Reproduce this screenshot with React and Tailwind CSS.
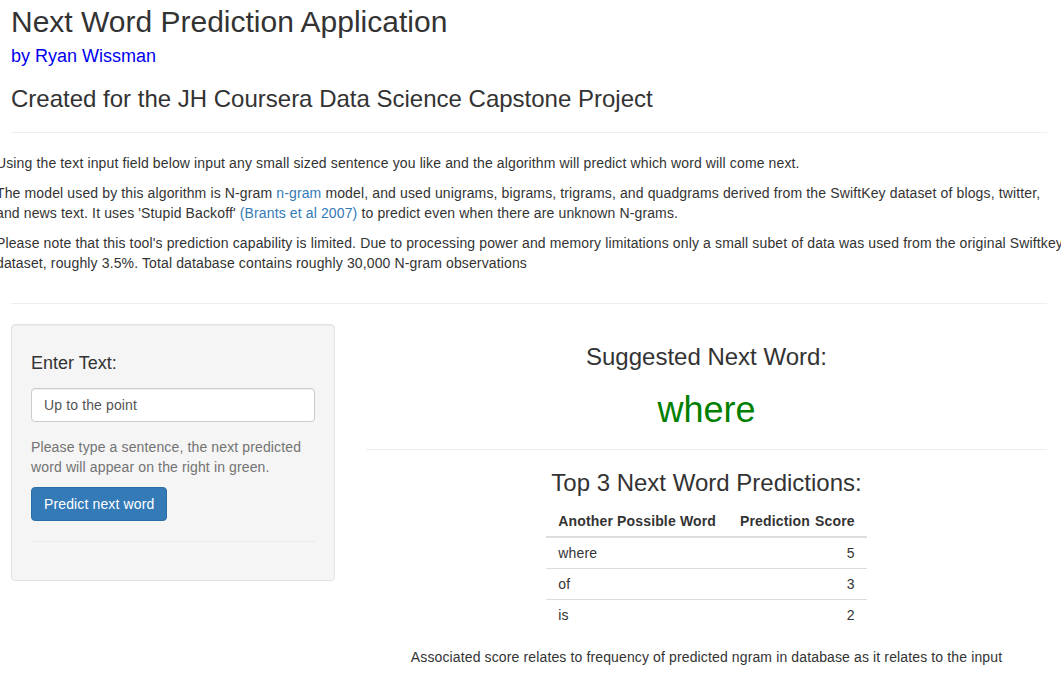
export default function App() {
    const predictions = [
        { word: 'where', score: 5 },
        { word: 'of', score: 3 },
        { word: 'is', score: 2 },
    ];

    return (
        <div className="min-h-screen overflow-hidden bg-white pl-[11px] pr-[14px] font-['Liberation_Sans',Arial,sans-serif] text-[14px] leading-[20px] tracking-[0.13px] text-[#333]">
            {/* Title panel */}
            <h2 className="pt-[5px] text-[30px] leading-[33px] font-normal tracking-normal">Next Word Prediction Application</h2>
            <h4 className="mt-[8px] text-[18px] leading-[20px] tracking-normal text-[#0000ee]">by Ryan Wissman</h4>
            <h3 className="mt-[20px] text-[24px] leading-[26px] tracking-normal">Created for the JH Coursera Data Science Capstone Project</h3>
            <hr className="mt-[20px] border-t border-[#eee]" />

            {/* Description */}
            <div className="mx-[-15px] mt-[20px]">
                <p className="mb-[10px] whitespace-nowrap">
                    Using the text input field below input any small sized sentence you like and the algorithm will predict which word will come next.
                </p>
                <p className="mb-[10px] whitespace-nowrap">
                    The model used by this algorithm is N-gram <a className="text-[#337ab7]">n-gram</a> model, and used unigrams, bigrams, trigrams, and quadgrams derived from the SwiftKey dataset of blogs, twitter,
                    <br />
                    and news text. It uses 'Stupid Backoff' <a className="text-[#337ab7]">(Brants et al 2007)</a> to predict even when there are unknown N-grams.
                </p>
                <p className="whitespace-nowrap">
                    Please note that this tool's prediction capability is limited. Due to processing power and memory limitations only a small subet of data was used from the original Swiftkey
                    <br />
                    dataset, roughly 3.5%. Total database contains roughly 30,000 N-gram observations
                </p>
            </div>
            <hr className="mt-[30px] border-t border-[#eee]" />

            {/* Sidebar + main */}
            <div className="mt-[20px] flex gap-[31px]">
                <div className="w-[324px] shrink-0 self-start rounded-[4px] border border-[#e3e3e3] bg-[#f5f5f5] p-[19px] shadow-[inset_0_1px_1px_rgba(0,0,0,0.05)]">
                    <label className="mt-[9px] block text-[18px] leading-[20px] tracking-normal">Enter Text:</label>
                    <input
                        type="text"
                        defaultValue="Up to the point"
                        className="mt-[15px] block h-[34px] w-full rounded-[4px] border border-[#ccc] bg-white px-[12px] py-[6px] text-[14px] tracking-[0.13px] text-[#555] shadow-[inset_0_1px_1px_rgba(0,0,0,0.075)] outline-none"
                    />
                    <p className="mt-[15px] text-[#737373]">
                        Please type a sentence, the next predicted word will appear on the right in green.
                    </p>
                    <button className="mt-[10px] h-[34px] rounded-[4px] border border-[#2e6da4] bg-[#337ab7] px-[12px] text-[14px] text-white">
                        Predict next word
                    </button>
                    <hr className="mt-[20px] mb-[19px] border-t border-[#eaeaea]" />
                </div>

                <div className="flex-1 text-center">
                    <h3 className="mt-[20px] text-[24px] leading-[26px] tracking-normal">Suggested Next Word:</h3>
                    <h2 className="mt-[20px] text-[36px] leading-[40px] tracking-normal text-[#008000]">where</h2>
                    <hr className="mt-[19px] border-t border-[#eee]" />
                    <h3 className="mt-[20px] text-[24px] leading-[26px] tracking-normal">Top 3 Next Word Predictions:</h3>
                    <table className="mx-auto mt-[10px] border-collapse">
                        <thead>
                            <tr className="border-b-2 border-[#ddd]">
                                <th className="px-[12px] py-[5px] text-left font-bold tracking-[0.15px]">Another Possible Word</th>
                                <th className="px-[12px] py-[5px] text-right font-bold tracking-[0.15px]">Prediction <span className="ml-[1px]">Score</span></th>
                            </tr>
                        </thead>
                        <tbody>
                            {predictions.map((p, i) => (
                                <tr key={p.word} className={i < predictions.length - 1 ? 'border-b border-[#ddd]' : ''}>
                                    <td className="px-[12px] py-[5px] text-left">{p.word}</td>
                                    <td className="px-[12px] py-[5px] text-right">{p.score}</td>
                                </tr>
                            ))}
                        </tbody>
                    </table>
                    <p className="mt-[17px]">Associated score relates to frequency of predicted ngram in database as it relates to the input</p>
                </div>
            </div>
        </div>
    );
}
